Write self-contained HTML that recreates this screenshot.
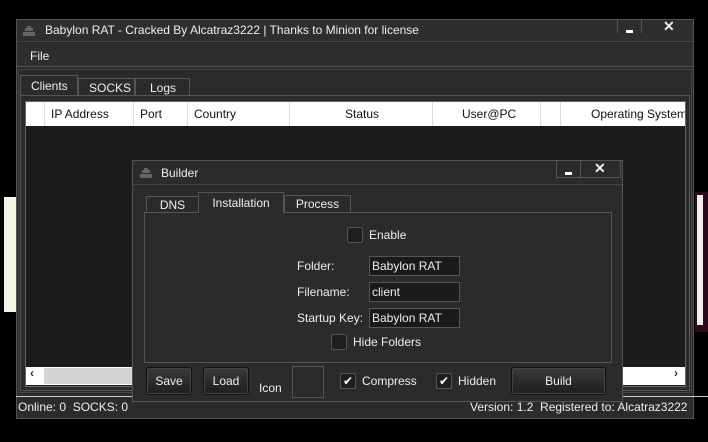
<!DOCTYPE html><html><head><style>
*{margin:0;padding:0;box-sizing:border-box}
body{width:708px;height:442px;background:#000;position:relative;overflow:hidden;font-family:"Liberation Sans",sans-serif;font-size:12px;color:#eee}
.a{position:absolute}
.cb{position:absolute;width:16px;height:16px;background:#1e1e1e;border:1px solid #555;border-radius:2px}
.btn{position:absolute;background:linear-gradient(#3a3a3a,#1e1e1e);border:1px solid #111;border-radius:3px;box-shadow:inset 0 0 0 1px #444;text-align:center;line-height:26px;color:#eee}
.inp{position:absolute;background:#1a1a1a;border:1px solid #555;padding-left:2px;line-height:18px;height:20px;width:91px;color:#eee}
.ck{color:#fff;font-size:12px;line-height:14px;text-align:center}
</style></head><body>
<div class="a" style="left:4px;top:197px;width:12px;height:115px;background:#f6f6e8"></div>
<div class="a" style="left:695px;top:192px;width:13px;height:140px;background:#2a0a18"></div>
<div class="a" style="left:697px;top:195px;width:6px;height:130px;background:#eee"></div>
<!-- main window -->
<div class="a" style="left:16px;top:19px;width:678px;height:400px;background:#2b2b2b;border:1px solid #555"></div>
<div class="a" style="left:17px;top:20px;width:676px;height:22px;background:#2e2e2e;border-bottom:1px solid #444"></div>
<svg class="a" style="left:22px;top:25px" width="14" height="12"><rect x="5" y="1" width="4" height="2" fill="#666"/><rect x="3" y="3" width="8" height="3" fill="#666"/><rect x="1" y="7" width="12" height="4" fill="#666"/></svg>
<div class="a" style="left:45px;top:23px;font-size:12px">Babylon RAT - Cracked By Alcatraz3222 | Thanks to Minion for license</div>
<div class="a" style="left:617px;top:20px;width:25px;height:13px;border-right:1px solid #555;border-left:1px solid #555"></div>
<div class="a" style="left:626px;top:30px;width:7px;height:3px;background:#fff"></div>
<div class="a" style="left:663px;top:18px;font-weight:bold;font-size:14px">✕</div>
<div class="a" style="left:17px;top:43px;width:676px;height:24px;background:#2e2e2e;border-bottom:1px solid #555"></div>
<div class="a" style="left:30px;top:49px">File</div>
<div class="a" style="left:18px;top:69px;width:674px;height:324px;border:1px solid #444"></div>
<div class="a" style="left:20px;top:75px;width:58px;height:21px;background:#2b2b2b;border:1px solid #555;border-bottom:none;padding:3px 0 0 10px">Clients</div>
<div class="a" style="left:78px;top:78px;width:57px;height:18px;border:1px solid #555;padding:2px 0 0 10px">SOCKS</div>
<div class="a" style="left:135px;top:78px;width:55px;height:18px;border:1px solid #555;padding:2px 0 0 14px">Logs</div>
<div class="a" style="left:20px;top:95px;width:670px;height:296px;border:1px solid #555"></div>
<div class="a" style="left:25px;top:101px;width:661px;height:286px;background:#1c1c1c;border:1px solid #666"></div>
<div class="a" style="left:26px;top:102px;width:659px;height:24px;background:#fff;color:#111"></div>
<div class="a" style="left:44px;top:102px;width:1px;height:24px;background:#ddd"></div>
<div class="a" style="left:133px;top:102px;width:1px;height:24px;background:#ddd"></div>
<div class="a" style="left:187px;top:102px;width:1px;height:24px;background:#ddd"></div>
<div class="a" style="left:289px;top:102px;width:1px;height:24px;background:#ddd"></div>
<div class="a" style="left:432px;top:102px;width:1px;height:24px;background:#ddd"></div>
<div class="a" style="left:540px;top:102px;width:1px;height:24px;background:#ddd"></div>
<div class="a" style="left:560px;top:102px;width:1px;height:24px;background:#ddd"></div>
<div class="a" style="top:107px;left:51px;color:#111">IP Address</div>
<div class="a" style="top:107px;left:140px;color:#111">Port</div>
<div class="a" style="top:107px;left:194px;color:#111">Country</div>
<div class="a" style="top:107px;left:345px;color:#111">Status</div>
<div class="a" style="top:107px;left:462px;color:#111">User@PC</div>
<div class="a" style="top:107px;left:591px;color:#111;width:94px;overflow:hidden;white-space:nowrap">Operating System</div>
<div class="a" style="left:26px;top:367px;width:659px;height:18px;background:#fff"></div>
<div class="a" style="left:44px;top:368px;width:100px;height:16px;background:#d4d4d4"></div>
<div class="a" style="left:30px;top:366px;color:#333;font-weight:bold">‹</div>
<div class="a" style="left:674px;top:366px;color:#333;font-weight:bold">›</div>
<div class="a" style="left:16px;top:396px;width:692px;height:1px;background:#ccc"></div>
<div class="a" style="left:18px;top:400px">Online: 0&nbsp; SOCKS: 0</div>
<div class="a" style="left:470px;top:400px">Version: 1.2&nbsp; Registered to: Alcatraz3222</div>
<!-- builder -->
<div class="a" style="left:132px;top:160px;width:491px;height:242px;background:#2b2b2b;border:1px solid #555"></div>
<div class="a" style="left:133px;top:161px;width:489px;height:24px;border-bottom:1px solid #444"></div>
<svg class="a" style="left:139px;top:167px" width="14" height="12"><rect x="5" y="1" width="4" height="2" fill="#666"/><rect x="3" y="3" width="8" height="3" fill="#666"/><rect x="1" y="7" width="12" height="4" fill="#666"/></svg>
<div class="a" style="left:161px;top:166px">Builder</div>
<div class="a" style="left:556px;top:161px;width:65px;height:17px;border:1px solid #555;border-top:none"></div>
<div class="a" style="left:580px;top:161px;width:1px;height:17px;background:#555"></div>
<div class="a" style="left:565px;top:172px;width:7px;height:3px;background:#fff"></div>
<div class="a" style="left:594px;top:160px;font-weight:bold;font-size:14px">✕</div>
<div class="a" style="left:146px;top:196px;width:53px;height:17px;border:1px solid #555;text-align:center;line-height:16px">DNS</div>
<div class="a" style="left:198px;top:192px;width:86px;height:21px;border:1px solid #555;border-bottom:none;background:#2b2b2b;text-align:center;line-height:20px;z-index:2">Installation</div>
<div class="a" style="left:284px;top:195px;width:67px;height:18px;border:1px solid #555;text-align:center;line-height:17px">Process</div>
<div class="a" style="left:144px;top:212px;width:468px;height:151px;border:1px solid #555"></div>
<div class="cb" style="left:347px;top:227px"></div>
<div class="a" style="left:369px;top:228px">Enable</div>
<div class="a" style="left:297px;top:259px">Folder:</div>
<div class="inp" style="left:369px;top:256px">Babylon RAT</div>
<div class="a" style="left:297px;top:285px">Filename:</div>
<div class="inp" style="left:369px;top:282px">client</div>
<div class="a" style="left:297px;top:311px">Startup Key:</div>
<div class="inp" style="left:369px;top:308px">Babylon RAT</div>
<div class="cb" style="left:331px;top:334px"></div>
<div class="a" style="left:353px;top:335px">Hide Folders</div>
<div class="btn" style="left:146px;top:367px;width:46px;height:28px">Save</div>
<div class="btn" style="left:203px;top:367px;width:46px;height:28px">Load</div>
<div class="a" style="left:259px;top:381px">Icon</div>
<div class="a" style="left:292px;top:366px;width:32px;height:32px;border:1px solid #555"></div>
<div class="cb ck" style="left:340px;top:373px">✔</div>
<div class="a" style="left:362px;top:374px">Compress</div>
<div class="cb ck" style="left:436px;top:373px">✔</div>
<div class="a" style="left:458px;top:374px">Hidden</div>
<div class="btn" style="left:511px;top:367px;width:95px;height:28px">Build</div>
</body></html>
